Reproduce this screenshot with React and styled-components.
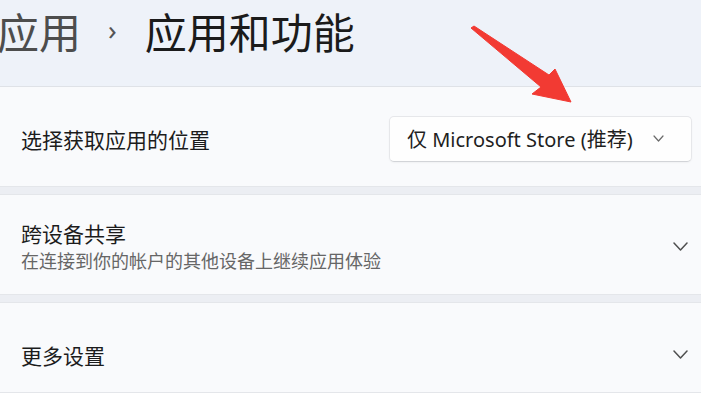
import React from "react";
import styled, { createGlobalStyle } from "styled-components";

const GlobalStyle = createGlobalStyle`
  html, body {
    margin: 0;
    padding: 0;
    background: #ffffff;
  }
  body {
    font-family: "Noto Sans", "Noto Sans CJK SC", sans-serif;
  }
`;

const Page = styled.div`
  position: relative;
  width: 701px;
  height: 411px;
  overflow: hidden;
  display: flex;
  flex-direction: column;
  background: #ffffff;
`;

const Header = styled.div`
  height: 87px;
  flex-shrink: 0;
  display: flex;
  align-items: flex-start;
  padding-top: 2px;
  box-sizing: border-box;
  background: #eef2f9;
  border-bottom: 1px solid #dfe2e7;
`;

const Breadcrumb = styled.div`
  display: flex;
  align-items: center;
  margin-left: -3px;
  font-family: "Noto Sans CJK SC", sans-serif;
  font-size: 42px;
  line-height: 58px;
`;

const Crumb = styled.span`
  color: ${(props) => (props.current ? "#1b1b1b" : "#4d4d4d")};
`;

const Separator = styled.span`
  margin: 0 28px 0 27px;
  font-family: "Noto Sans", sans-serif;
  font-size: 28px;
  color: #555555;
  position: relative;
  top: -2px;
`;

const List = styled.div`
  display: flex;
  flex-direction: column;
  gap: 7px;
  background: #eceef3;
`;

const Card = styled.div`
  height: ${(props) => props.height}px;
  padding: ${(props) => props.top}px 9px 0 21px;
  box-sizing: border-box;
  display: flex;
  align-items: center;
  justify-content: space-between;
  background: #f9fafc;
  border-top: 1px solid #e4e6ea;
  border-bottom: 1px solid #e4e6ea;
  &:first-child {
    border-top: none;
  }
`;

const TextBlock = styled.div`
  display: flex;
  flex-direction: column;
  gap: 4px;
`;

const Label = styled.div`
  font-family: "Noto Sans CJK SC", sans-serif;
  font-size: 21px;
  line-height: 24px;
  color: #1c1c1c;
`;

const Description = styled.div`
  font-family: "Noto Sans CJK SC", sans-serif;
  font-size: 18px;
  line-height: 22px;
  color: #666666;
`;

const Select = styled.div`
  width: 303px;
  height: 46px;
  box-sizing: border-box;
  display: flex;
  align-items: center;
  justify-content: space-between;
  padding: 0 27px 0 17px;
  background: #fefefe;
  border: 1px solid #e6e7ea;
  border-bottom-color: #d2d4d8;
  border-radius: 5px;
  box-shadow: 0 1px 2px rgba(0, 0, 0, 0.04);
`;

const SelectText = styled.span`
  font-family: "Noto Sans", "Noto Sans CJK SC", sans-serif;
  font-size: 20px;
  color: #1f1f1f;
  white-space: nowrap;
`;

const ExpandButton = styled.div`
  width: 24px;
  display: flex;
  justify-content: center;
`;

const Overlay = styled.svg`
  position: absolute;
  left: 0;
  top: 0;
  pointer-events: none;
`;

const Chevron = ({ width, height, color, stroke }) => (
  <svg width={width} height={height} viewBox={`0 0 ${width} ${height}`}>
    <polyline
      points={`1,1 ${width / 2},${height - 1} ${width - 1},1`}
      fill="none"
      stroke={color}
      strokeWidth={stroke}
      strokeLinecap="round"
      strokeLinejoin="round"
    />
  </svg>
);

export default function App() {
  return (
    <Page>
      <GlobalStyle />
      <Header>
        <Breadcrumb>
          <Crumb>应用</Crumb>
          <Separator>›</Separator>
          <Crumb current>应用和功能</Crumb>
        </Breadcrumb>
      </Header>
      <List>
        <Card height={100} top={4}>
          <Label>选择获取应用的位置</Label>
          <Select>
            <SelectText>仅 Microsoft Store (推荐)</SelectText>
            <Chevron width={11} height={7} color="#6a6a6a" stroke={1.2} />
          </Select>
        </Card>
        <Card height={101} top={3}>
          <TextBlock>
            <Label>跨设备共享</Label>
            <Description>在连接到你的帐户的其他设备上继续应用体验</Description>
          </TextBlock>
          <ExpandButton>
            <Chevron width={15} height={9} color="#4f4f4f" stroke={1.5} />
          </ExpandButton>
        </Card>
        <Card height={91} top={14}>
          <Label>更多设置</Label>
          <ExpandButton>
            <Chevron width={15} height={9} color="#4f4f4f" stroke={1.5} />
          </ExpandButton>
        </Card>
      </List>
      <Overlay width="701" height="411" viewBox="0 0 701 411">
        <polygon
          points="471,28 474,26 549,75 555,69 571,102 532,94 541,87"
          fill="#f23a33"
          stroke="#f23a33"
          strokeWidth="1"
          strokeLinejoin="round"
        />
      </Overlay>
    </Page>
  );
}
